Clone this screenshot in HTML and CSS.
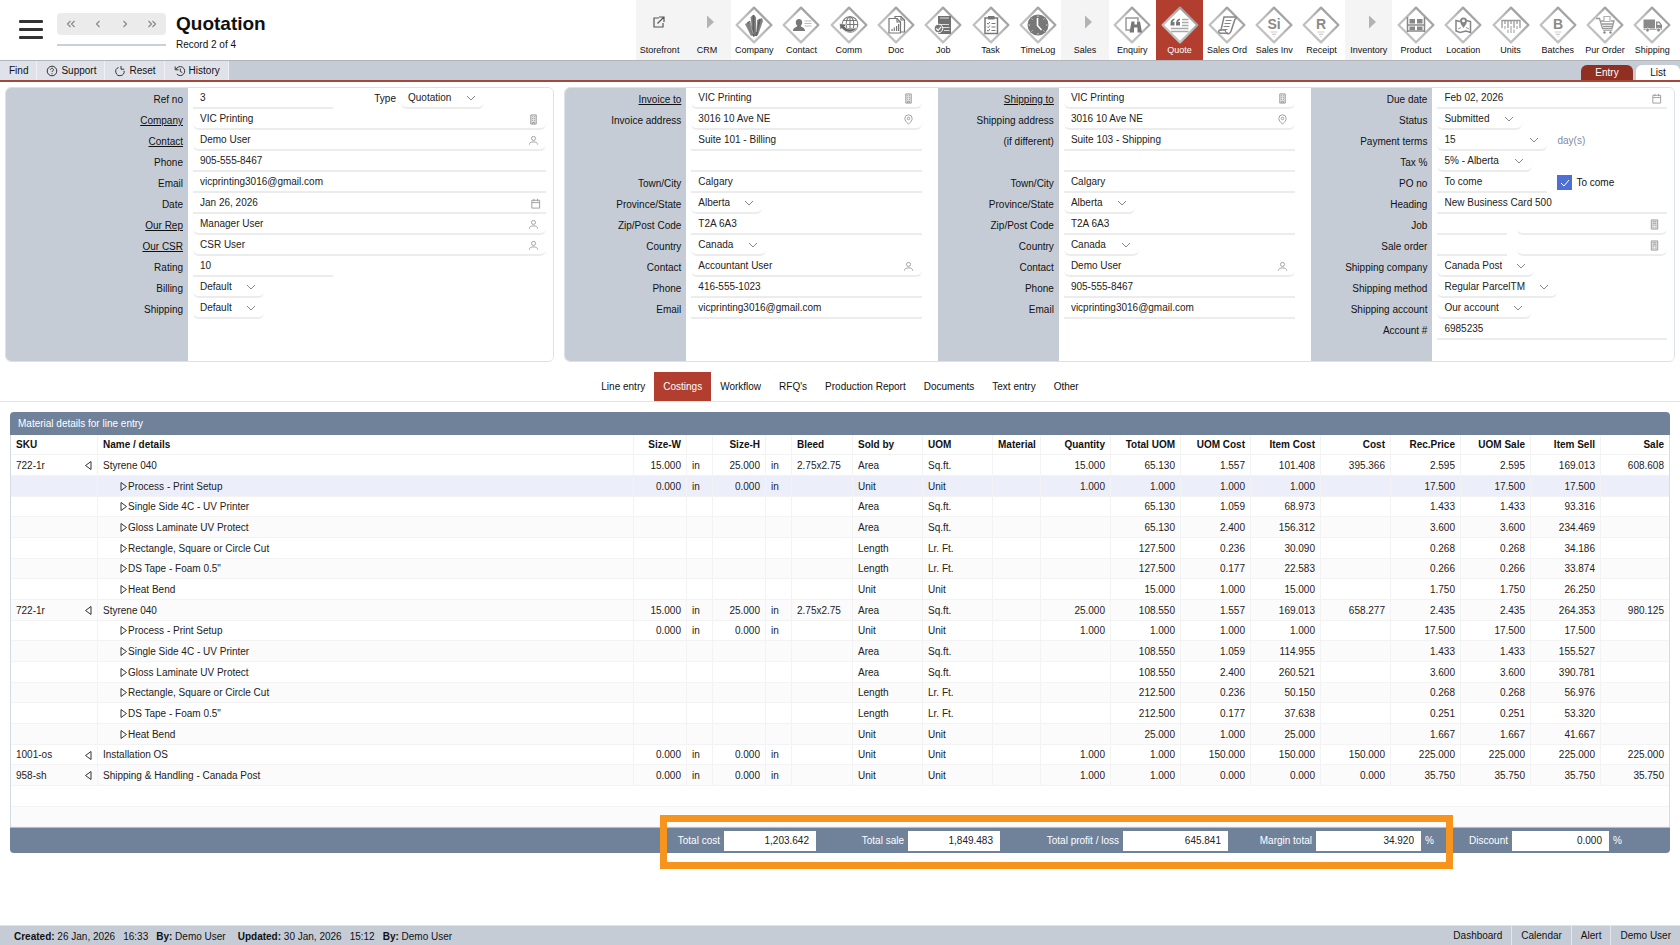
FILE: index.html
```html
<!DOCTYPE html>
<html lang="en">
<head>
<meta charset="utf-8">
<title>Quotation</title>
<link rel="stylesheet" href="styles.css">
</head>
<body>
<svg class="sprite" aria-hidden="true">
  <linearGradient id="edge" x1="0" y1="1" x2="1" y2="0"><stop offset="0" stop-color="#c4c4c4"/><stop offset=".5" stop-color="#bcbcbc"/><stop offset="1" stop-color="#8a8a8a"/></linearGradient>
  <symbol id="diamond" viewBox="0 0 38 38"><path d="M19 1.6 36.4 19 19 36.4 1.6 19Z" fill="#fff" stroke="url(#edge)" stroke-width="2.200" stroke-linejoin="round"/></symbol>
  <symbol id="play" viewBox="0 0 38 38"><path d="M19 9.500 26 16 19 22.500Z" fill="#b3b3b3"/></symbol>
  <symbol id="person" viewBox="0 0 12 12"><circle cx="6" cy="3.700" r="2.200"/><path d="M1.500 10.500C1.500 8.500 3 7.500 6 7.500s4.500 1 4.500 3"/></symbol>
  <symbol id="building" viewBox="0 0 12 12"><path d="M3 1h6v10H3Z" fill="#e4e4e4"/><path d="M4.500 3h1M6.700 3h1M4.500 5h1M6.700 5h1M4.500 7h1M6.700 7h1M5 11V9.200h2V11"/></symbol>
  <symbol id="calendar" viewBox="0 0 12 12"><path d="M2 2.500h8.500v8.500H2ZM2 5h8.500M4.200 1v2.500M8.200 1v2.500"/></symbol>
  <symbol id="pin" viewBox="0 0 12 12"><path d="M6 11C3.500 8.600 2 7 2 4.900a4 4 0 0 1 8 0C10 7 8.500 8.600 6 11Z"/><circle cx="6" cy="4.900" r="1.400"/></symbol>
  <symbol id="calc" viewBox="0 0 12 12"><path d="M2.500 1h7v10h-7Z" fill="#e4e4e4"/><path d="M4 3h4M4 5.200h4M4 7h1M7 7h1M4 9h1M7 9h1"/></symbol>
  <symbol id="tri-left" viewBox="0 0 8 11"><path d="M7 1.500v8L1.500 5.500Z"/></symbol>
  <symbol id="tri-right" viewBox="0 0 8 11"><path d="M1 1.500v8l5.500-4Z"/></symbol>
</svg>

<header class="top">
  <button class="burger" aria-label="Menu"><span></span><span></span><span></span></button>
  <div class="pager">
    <div class="pager-buttons">
      <button aria-label="First record"><svg viewBox="0 0 10 8"><path d="M4.500 1 1.500 4l3 3M8.500 1l-3 3 3 3"/></svg></button>
      <button aria-label="Previous record"><svg viewBox="0 0 10 8"><path d="M6.500 1l-3 3 3 3"/></svg></button>
      <button aria-label="Next record"><svg viewBox="0 0 10 8"><path d="M3.500 1l3 3-3 3"/></svg></button>
      <button aria-label="Last record"><svg viewBox="0 0 10 8"><path d="M1.500 1l3 3-3 3M5.500 1l3 3-3 3"/></svg></button>
    </div>
    <div class="pager-line"></div>
  </div>
  <div class="heading"><h1>Quotation</h1><p>Record 2 of 4</p></div>
  <nav class="modules">
    <a href="#" class="group"><svg viewBox="0 0 38 38"><path d="M18 12h-5v9h9v-4M18 11h5v5M23 11l-6.500 6.500" fill="none" stroke="#555" stroke-width="1.200"/></svg>Storefront</a>
    <a href="#" class="group"><svg><use href="#play"/></svg>CRM</a>
    <a href="#"><svg viewBox="0 0 38 38"><use href="#diamond"/><path d="M10 18l4-2 4 13-2 1ZM15.500 11l3-2 2.500 2v19l-3 1ZM22 14l5-2 1 3-5 14-2 1Z" fill="#858585"/><path d="M12.500 17l2-1 4 13M18.500 9v21M25 13l-4 17" fill="none" stroke="#5f5f5f" stroke-width="1.800"/><path d="M14.600 16l3.600 12M21.700 12v14" stroke="#eee" stroke-width=".5"/></svg>Company</a>
    <a href="#"><svg viewBox="0 0 38 38"><use href="#diamond"/><path d="M17 13c2 0 3.200 1.400 3.200 3.400 0 1.700-.8 2.700-1.500 3.400 0 1.500 4.300 1.500 4.300 5.200H11c0-3.700 4.300-3.700 4.300-5.200-.7-.7-1.500-1.700-1.500-3.400 0-2 1.200-3.400 3.200-3.400Z" fill="#777"/><path d="M22.500 15h7M22.500 17.500h7M22.500 20h7" stroke="#bbb"/></svg>Contact</a>
    <a href="#"><svg viewBox="0 0 38 38"><use href="#diamond"/><g fill="none" stroke="#777" stroke-width="1.100"><circle cx="20" cy="18.500" r="7.800"/><ellipse cx="20" cy="18.500" rx="3.800" ry="7.800"/><path d="M20 10.700v15.600M12.300 18.500h15.500M13.500 14.500h13M13.500 22.500h13"/></g><path d="M9.500 17.500l7 1-2 2c2.500 3 7.500 3.500 12.500.500-2.500 6-10.500 7-15 1.500l-1.800 1Z" fill="#666" stroke="#fff" stroke-width=".6"/></svg>Comm</a>
    <a href="#"><svg viewBox="0 0 38 38"><use href="#diamond"/><g fill="#fff" stroke="#777" stroke-width="1.200"><path d="M18 10.500h6l3.500 3.500v12H18Z"/><path d="M12 12.500h8l3.500 3.500v11H12Z"/><path d="M24 10.500V14h3.500M20 12.500V16h3.500M15 25v-2M17.300 25v-3.500M19.600 25v-5M21.600 25v-7" fill="none"/></g></svg>Doc</a>
    <a href="#"><svg viewBox="0 0 38 38"><use href="#diamond"/><path d="M14 10h13v18H14Z" fill="#707070"/><path d="M16 12h9M16 18.500h9M18.500 21.500h7M20 24.500h5.500" stroke="#ddd" stroke-width="1.200"/><circle cx="14.500" cy="22.500" r="4.300" fill="#777" stroke="#fff"/><path d="M12.300 22.500l1.800 1.800 3-3.500" fill="none" stroke="#fff" stroke-width="1.200"/></svg>Job</a>
    <a href="#"><svg viewBox="0 0 38 38"><use href="#diamond"/><path d="M13 12h12.500v15.500H13Z" fill="#fff" stroke="#777" stroke-width="1.500"/><path d="M16 10h6.500v3.500H16Z" fill="#777"/><path d="M15 17l1.200 1.200L18 16M15 20.500l1.200 1.200 1.800-2.200M15 24l1.200 1.200L18 23M19.500 17.500h4M19.500 21h4M19.500 24.500h4" fill="none" stroke="#777"/></svg>Task</a>
    <a href="#"><svg viewBox="0 0 38 38"><use href="#diamond"/><circle cx="19" cy="19" r="10.500" fill="#777"/><path d="M18.500 12v7.500l4 4.500" fill="none" stroke="#fff" stroke-width="1.600"/><path d="M19 9.500v1.500M19 27v1.500M9.500 19H11M27 19h1.500M12.500 12.500l1 1M25.500 12.500l-1 1M12.500 25.500l1-1M25.500 25.500l-1-1" stroke="#ddd"/></svg>TimeLog</a>
    <a href="#" class="group"><svg><use href="#play"/></svg>Sales</a>
    <a href="#"><svg viewBox="0 0 38 38"><use href="#diamond"/><path d="M17 24h-4V12h12v3" fill="none" stroke="#999" stroke-width="1.500"/><path d="M18.500 15.500h3v3h2.500v-3h3l2 11h-4.500v-5h-3.500v5h-4.500Z" fill="#777"/></svg>Enquiry</a>
    <a href="#" class="current" aria-current="page"><svg viewBox="0 0 38 38"><use href="#diamond"/><path d="M9.500 18c0-3 1-5 4-5.500v1.500c-1.300.5-1.600 1-1.600 2h1.600v3.500h-4ZM15 18c0-3 1-5 4-5.500v1.500c-1.300.5-1.600 1-1.600 2H19v3.500h-4Z" fill="#777"/><path d="M21 13.500h6.500M21 16.500h6.500M21 19.500h6.500M10 22.500h17.500M10 25.500h17.500" stroke="#aaa" stroke-width="1.500"/></svg>Quote</a>
    <a href="#"><svg viewBox="0 0 38 38"><use href="#diamond"/><path d="M16 11h11c1.500 0 1.500 2 0 2.200l-4 12c-.7 3-3.500 3-5 2H12c-2-1-1.500-3 0-3.200h1Z" fill="#fff" stroke="#858585" stroke-width="1.500"/><path d="M17.500 14.500h6M16.500 17.500h6M15.500 20.500h6M14.500 23.500h5M12 24.200h5.500c-.5 2 1 3 2.500 2.300" fill="none" stroke="#858585" stroke-width="1.200"/></svg>Sales Ord</a>
    <a href="#"><svg viewBox="0 0 38 38"><use href="#diamond"/><text x="19" y="22.500" class="letter">Si</text><path d="M15.500 26h7M17 28.300h4M18.500 30.500h1" stroke="#ccc" stroke-width="1.200"/></svg>Sales Inv</a>
    <a href="#"><svg viewBox="0 0 38 38"><use href="#diamond"/><text x="19" y="22.500" class="letter">R</text><path d="M15.500 26h7M17 28.300h4M18.500 30.500h1" stroke="#ccc" stroke-width="1.200"/></svg>Receipt</a>
    <a href="#" class="group"><svg><use href="#play"/></svg>Inventory</a>
    <a href="#"><svg viewBox="0 0 38 38"><use href="#diamond"/><path d="M10.500 11v15M27.500 11v15M10.500 19h17M10.500 25h17" stroke="#888" stroke-width="1.500"/><path d="M12.500 13h5.500v4.500h-5.500ZM20 13h5.500v4.500H20ZM12.500 20.500h5.500V24h-5.500ZM20 20.500h5.500V24H20Z" fill="#888"/></svg>Product</a>
    <a href="#"><svg viewBox="0 0 38 38"><use href="#diamond"/><path d="M16 15.500l-4-1v10.500l4 1.500 6-1.500 4.500 1.500V15.500l-4-1" fill="none" stroke="#858585" stroke-width="1.500"/><path d="M19.500 22c-2-3-3.500-5-3.500-7a3.500 3.500 0 0 1 7 0c0 2-1.500 4-3.500 7Z" fill="#858585"/><circle cx="19.500" cy="14.800" r="1.500" fill="#fff"/><path d="M14 23l3-1.500M22 21.500l3 1.500" stroke="#999"/></svg>Location</a>
    <a href="#"><svg viewBox="0 0 38 38"><use href="#diamond"/><path d="M10 22v-7.500h18V22M13 14.500V18M16 14.500V22M19 14.500V18M22 14.500V22M25 14.500V18" fill="none" stroke="#999" stroke-width="1.300"/><path d="M13 20v3M16 23.500V27M19 20v7M22 23.500V27M25 20v3" stroke="#b8b8b8" stroke-width="1.400"/></svg>Units</a>
    <a href="#"><svg viewBox="0 0 38 38"><use href="#diamond"/><text x="19" y="22.500" class="letter">B</text><path d="M15.500 26h7M17 28.300h4M18.500 30.500h1" stroke="#ccc" stroke-width="1.200"/></svg>Batches</a>
    <a href="#"><svg viewBox="0 0 38 38"><use href="#diamond"/><path d="M10 12.500h3.500l3 10h9.500l2-7.500h-3M16 18h10.500M15 15h3M17 20.300h9" fill="none" stroke="#999" stroke-width="1.300"/><path d="M18 10.500h6v5h-6ZM17 24.300h9.500" fill="none" stroke="#b0b0b0" stroke-width="1.200"/><circle cx="18.500" cy="26.500" r="1.200" fill="#888"/><circle cx="24.500" cy="26.500" r="1.200" fill="#888"/></svg>Pur Order</a>
    <a href="#"><svg viewBox="0 0 38 38"><use href="#diamond"/><path d="M10.500 13.500H22v9H10.500ZM23 15.500h3.500l2.500 3.500v3.500h-6Z" fill="#8a8a8a"/><path d="M10.500 23.500H29" stroke="#aaa"/><path d="M24.300 16.800h1.700l1.500 2.200h-3.200Z" fill="#eee"/><circle cx="14.500" cy="24" r="1.900" fill="#8a8a8a" stroke="#fff" stroke-width=".7"/><circle cx="25.500" cy="24" r="1.900" fill="#8a8a8a" stroke="#fff" stroke-width=".7"/></svg>Shipping</a>
  </nav>
</header>

<div class="toolbar">
  <button>Find</button>
  <button><svg viewBox="0 0 12 12"><circle cx="6" cy="6" r="4.800"/><path d="M4.500 4.800c0-2 3-2 3 0 0 1.200-1.500 1-1.500 2.200M6 8.200v1"/></svg>Support</button>
  <button><svg viewBox="0 0 12 12"><path d="M4.500 2.500a4.200 4.200 0 1 0 5.600 3.300M7 1v3.200h3.200"/></svg>Reset</button>
  <button><svg viewBox="0 0 12 12"><path d="M2 4.500a4.500 4.500 0 1 1 .8 4.500M1.200 1.500v3.300h3.300M6.300 3.500v3l2 1"/></svg>History</button>
  <div class="views"><a href="#" class="on">Entry</a><a href="#">List</a></div>
</div>

<main>
<form class="record">
  <section class="panel panel-main">
    <div class="col">
      <div class="row"><label for="ref">Ref no</label><div class="field"><input class="line w140" id="ref" value="3"><label class="inline" for="type">Type</label><select id="type"><option>Quotation</option></select></div></div>
      <div class="row"><label for="company"><a href="#">Company</a></label><div class="field"><span class="lookup"><input id="company" value="VIC Printing"><button type="button" aria-label="Find company"><svg><use href="#building"/></svg></button></span></div></div>
      <div class="row"><label for="contact"><a href="#">Contact</a></label><div class="field"><span class="lookup"><input id="contact" value="Demo User"><button type="button" aria-label="Find contact"><svg><use href="#person"/></svg></button></span></div></div>
      <div class="row"><label for="phone">Phone</label><div class="field"><input class="line" id="phone" value="905-555-8467"></div></div>
      <div class="row"><label for="email">Email</label><div class="field"><input class="line" id="email" value="vicprinting3016@gmail.com"></div></div>
      <div class="row"><label for="date">Date</label><div class="field"><span class="lookup flat"><input id="date" value="Jan 26, 2026"><button type="button" aria-label="Pick date"><svg><use href="#calendar"/></svg></button></span></div></div>
      <div class="row"><label for="rep"><a href="#">Our Rep</a></label><div class="field"><span class="lookup"><input id="rep" value="Manager User"><button type="button" aria-label="Find rep"><svg><use href="#person"/></svg></button></span></div></div>
      <div class="row"><label for="csr"><a href="#">Our CSR</a></label><div class="field"><span class="lookup"><input id="csr" value="CSR User"><button type="button" aria-label="Find CSR"><svg><use href="#person"/></svg></button></span></div></div>
      <div class="row"><label for="rating">Rating</label><div class="field"><input class="line w140" id="rating" value="10"></div></div>
      <div class="row"><label for="billing">Billing</label><div class="field"><select id="billing"><option>Default</option></select></div></div>
      <div class="row"><label for="shipping">Shipping</label><div class="field"><select id="shipping"><option>Default</option></select></div></div>
    </div>
  </section>

  <section class="panel panel-wide">
    <div class="col addr">
      <div class="row"><label for="i-to"><a href="#">Invoice to</a></label><div class="field"><span class="lookup"><input id="i-to" value="VIC Printing"><button type="button" aria-label="Find company"><svg><use href="#building"/></svg></button></span></div></div>
      <div class="row"><label for="i-addr">Invoice address</label><div class="field"><span class="lookup"><input id="i-addr" value="3016 10 Ave NE"><button type="button" aria-label="Find address"><svg><use href="#pin"/></svg></button></span></div></div>
      <div class="row"><span></span><div class="field"><input class="line" aria-label="Invoice address line 2" value="Suite 101 - Billing"></div></div>
      <div class="row"><span></span><div class="field"><input class="line" aria-label="Invoice address line 3"></div></div>
      <div class="row"><label for="i-city">Town/City</label><div class="field"><input class="line" id="i-city" value="Calgary"></div></div>
      <div class="row"><label for="i-prov">Province/State</label><div class="field"><select id="i-prov"><option>Alberta</option></select></div></div>
      <div class="row"><label for="i-zip">Zip/Post Code</label><div class="field"><input class="line" id="i-zip" value="T2A 6A3"></div></div>
      <div class="row"><label for="i-country">Country</label><div class="field"><select id="i-country"><option>Canada</option></select></div></div>
      <div class="row"><label for="i-contact">Contact</label><div class="field"><span class="lookup"><input id="i-contact" value="Accountant User"><button type="button" aria-label="Find contact"><svg><use href="#person"/></svg></button></span></div></div>
      <div class="row"><label for="i-phone">Phone</label><div class="field"><input class="line" id="i-phone" value="416-555-1023"></div></div>
      <div class="row"><label for="i-email">Email</label><div class="field"><input class="line" id="i-email" value="vicprinting3016@gmail.com"></div></div>
    </div>
    <div class="col addr">
      <div class="row"><label for="s-to"><a href="#">Shipping to</a></label><div class="field"><span class="lookup"><input id="s-to" value="VIC Printing"><button type="button" aria-label="Find company"><svg><use href="#building"/></svg></button></span></div></div>
      <div class="row"><label for="s-addr">Shipping address</label><div class="field"><span class="lookup"><input id="s-addr" value="3016 10 Ave NE"><button type="button" aria-label="Find address"><svg><use href="#pin"/></svg></button></span></div></div>
      <div class="row"><label for="s-addr2">(if different)</label><div class="field"><input class="line" id="s-addr2" value="Suite 103 - Shipping"></div></div>
      <div class="row"><span></span><div class="field"><input class="line" aria-label="Shipping address line 3"></div></div>
      <div class="row"><label for="s-city">Town/City</label><div class="field"><input class="line" id="s-city" value="Calgary"></div></div>
      <div class="row"><label for="s-prov">Province/State</label><div class="field"><select id="s-prov"><option>Alberta</option></select></div></div>
      <div class="row"><label for="s-zip">Zip/Post Code</label><div class="field"><input class="line" id="s-zip" value="T2A 6A3"></div></div>
      <div class="row"><label for="s-country">Country</label><div class="field"><select id="s-country"><option>Canada</option></select></div></div>
      <div class="row"><label for="s-contact">Contact</label><div class="field"><span class="lookup"><input id="s-contact" value="Demo User"><button type="button" aria-label="Find contact"><svg><use href="#person"/></svg></button></span></div></div>
      <div class="row"><label for="s-phone">Phone</label><div class="field"><input class="line" id="s-phone" value="905-555-8467"></div></div>
      <div class="row"><label for="s-email">Email</label><div class="field"><input class="line" id="s-email" value="vicprinting3016@gmail.com"></div></div>
    </div>
    <div class="col terms">
      <div class="row"><label for="due">Due date</label><div class="field"><span class="lookup flat"><input id="due" value="Feb 02, 2026"><button type="button" aria-label="Pick date"><svg><use href="#calendar"/></svg></button></span></div></div>
      <div class="row"><label for="status">Status</label><div class="field"><select id="status"><option>Submitted</option></select></div></div>
      <div class="row"><label for="pay">Payment terms</label><div class="field"><select class="w110" id="pay"><option>15</option></select><span class="unit">day(s)</span></div></div>
      <div class="row"><label for="tax">Tax %</label><div class="field"><select id="tax"><option>5% - Alberta</option></select></div></div>
      <div class="row"><label for="po">PO no</label><div class="field"><input class="line w110" id="po" value="To come"><label class="check"><input type="checkbox" checked>To come</label></div></div>
      <div class="row"><label for="head">Heading</label><div class="field"><input class="line" id="head" value="New Business Card 500"></div></div>
      <div class="row"><label for="job">Job</label><div class="field pair"><input class="line w70" id="job"><span class="lookup"><input aria-label="Job name"><button type="button" aria-label="Find job"><svg><use href="#calc"/></svg></button></span></div></div>
      <div class="row"><label for="so">Sale order</label><div class="field pair"><input class="line w70" id="so"><span class="lookup"><input aria-label="Sale order name"><button type="button" aria-label="Find sale order"><svg><use href="#calc"/></svg></button></span></div></div>
      <div class="row"><label for="sc">Shipping company</label><div class="field"><select id="sc"><option>Canada Post</option></select></div></div>
      <div class="row"><label for="sm">Shipping method</label><div class="field"><select id="sm"><option>Regular ParcelTM</option></select></div></div>
      <div class="row"><label for="sa">Shipping account</label><div class="field"><select id="sa"><option>Our account</option></select></div></div>
      <div class="row"><label for="acc">Account #</label><div class="field"><input class="line" id="acc" value="6985235"></div></div>
    </div>
  </section>
</form>

<nav class="tabs">
  <a href="#">Line entry</a><a href="#" class="on">Costings</a><a href="#">Workflow</a><a href="#">RFQ's</a><a href="#">Production Report</a><a href="#">Documents</a><a href="#">Text entry</a><a href="#">Other</a>
</nav>

<section class="card">
  <h2>Material details for line entry</h2>
  <table>
    <colgroup><col class="c-sku"><col><col class="c-size"><col class="c-unit"><col class="c-size"><col class="c-unit"><col class="c-bleed"><col class="c-num"><col class="c-num"><col class="c-mat"><col class="c-num" span="8"><col class="c-last"></colgroup>
    <thead><tr><th>SKU</th><th>Name / details</th><th class="n">Size-W</th><th></th><th class="n">Size-H</th><th></th><th>Bleed</th><th>Sold by</th><th>UOM</th><th>Material</th><th class="n">Quantity</th><th class="n">Total UOM</th><th class="n">UOM Cost</th><th class="n">Item Cost</th><th class="n">Cost</th><th class="n">Rec.Price</th><th class="n">UOM Sale</th><th class="n">Item Sell</th><th class="n">Sale</th></tr></thead>
    <tbody>
      <tr><td><span class="sku">722-1r<svg><use href="#tri-left"/></svg></span></td><td>Styrene 040</td><td>15.000</td><td>in</td><td>25.000</td><td>in</td><td>2.75x2.75</td><td>Area</td><td>Sq.ft.</td><td></td><td>15.000</td><td>65.130</td><td>1.557</td><td>101.408</td><td>395.366</td><td>2.595</td><td>2.595</td><td>169.013</td><td>608.608</td></tr>
      <tr class="selected"><td></td><td class="sub"><svg><use href="#tri-right"/></svg>Process - Print Setup</td><td>0.000</td><td>in</td><td>0.000</td><td>in</td><td></td><td>Unit</td><td>Unit</td><td></td><td>1.000</td><td>1.000</td><td>1.000</td><td>1.000</td><td></td><td>17.500</td><td>17.500</td><td>17.500</td><td></td></tr>
      <tr><td></td><td class="sub"><svg><use href="#tri-right"/></svg>Single Side 4C - UV Printer</td><td></td><td></td><td></td><td></td><td></td><td>Area</td><td>Sq.ft.</td><td></td><td></td><td>65.130</td><td>1.059</td><td>68.973</td><td></td><td>1.433</td><td>1.433</td><td>93.316</td><td></td></tr>
      <tr><td></td><td class="sub"><svg><use href="#tri-right"/></svg>Gloss Laminate UV Protect</td><td></td><td></td><td></td><td></td><td></td><td>Area</td><td>Sq.ft.</td><td></td><td></td><td>65.130</td><td>2.400</td><td>156.312</td><td></td><td>3.600</td><td>3.600</td><td>234.469</td><td></td></tr>
      <tr><td></td><td class="sub"><svg><use href="#tri-right"/></svg>Rectangle, Square or Circle Cut</td><td></td><td></td><td></td><td></td><td></td><td>Length</td><td>Lr. Ft.</td><td></td><td></td><td>127.500</td><td>0.236</td><td>30.090</td><td></td><td>0.268</td><td>0.268</td><td>34.186</td><td></td></tr>
      <tr><td></td><td class="sub"><svg><use href="#tri-right"/></svg>DS Tape - Foam 0.5"</td><td></td><td></td><td></td><td></td><td></td><td>Length</td><td>Lr. Ft.</td><td></td><td></td><td>127.500</td><td>0.177</td><td>22.583</td><td></td><td>0.266</td><td>0.266</td><td>33.874</td><td></td></tr>
      <tr><td></td><td class="sub"><svg><use href="#tri-right"/></svg>Heat Bend</td><td></td><td></td><td></td><td></td><td></td><td>Unit</td><td>Unit</td><td></td><td></td><td>15.000</td><td>1.000</td><td>15.000</td><td></td><td>1.750</td><td>1.750</td><td>26.250</td><td></td></tr>
      <tr><td><span class="sku">722-1r<svg><use href="#tri-left"/></svg></span></td><td>Styrene 040</td><td>15.000</td><td>in</td><td>25.000</td><td>in</td><td>2.75x2.75</td><td>Area</td><td>Sq.ft.</td><td></td><td>25.000</td><td>108.550</td><td>1.557</td><td>169.013</td><td>658.277</td><td>2.435</td><td>2.435</td><td>264.353</td><td>980.125</td></tr>
      <tr><td></td><td class="sub"><svg><use href="#tri-right"/></svg>Process - Print Setup</td><td>0.000</td><td>in</td><td>0.000</td><td>in</td><td></td><td>Unit</td><td>Unit</td><td></td><td>1.000</td><td>1.000</td><td>1.000</td><td>1.000</td><td></td><td>17.500</td><td>17.500</td><td>17.500</td><td></td></tr>
      <tr><td></td><td class="sub"><svg><use href="#tri-right"/></svg>Single Side 4C - UV Printer</td><td></td><td></td><td></td><td></td><td></td><td>Area</td><td>Sq.ft.</td><td></td><td></td><td>108.550</td><td>1.059</td><td>114.955</td><td></td><td>1.433</td><td>1.433</td><td>155.527</td><td></td></tr>
      <tr><td></td><td class="sub"><svg><use href="#tri-right"/></svg>Gloss Laminate UV Protect</td><td></td><td></td><td></td><td></td><td></td><td>Area</td><td>Sq.ft.</td><td></td><td></td><td>108.550</td><td>2.400</td><td>260.521</td><td></td><td>3.600</td><td>3.600</td><td>390.781</td><td></td></tr>
      <tr><td></td><td class="sub"><svg><use href="#tri-right"/></svg>Rectangle, Square or Circle Cut</td><td></td><td></td><td></td><td></td><td></td><td>Length</td><td>Lr. Ft.</td><td></td><td></td><td>212.500</td><td>0.236</td><td>50.150</td><td></td><td>0.268</td><td>0.268</td><td>56.976</td><td></td></tr>
      <tr><td></td><td class="sub"><svg><use href="#tri-right"/></svg>DS Tape - Foam 0.5"</td><td></td><td></td><td></td><td></td><td></td><td>Length</td><td>Lr. Ft.</td><td></td><td></td><td>212.500</td><td>0.177</td><td>37.638</td><td></td><td>0.251</td><td>0.251</td><td>53.320</td><td></td></tr>
      <tr><td></td><td class="sub"><svg><use href="#tri-right"/></svg>Heat Bend</td><td></td><td></td><td></td><td></td><td></td><td>Unit</td><td>Unit</td><td></td><td></td><td>25.000</td><td>1.000</td><td>25.000</td><td></td><td>1.667</td><td>1.667</td><td>41.667</td><td></td></tr>
      <tr><td><span class="sku">1001-os<svg><use href="#tri-left"/></svg></span></td><td>Installation OS</td><td>0.000</td><td>in</td><td>0.000</td><td>in</td><td></td><td>Unit</td><td>Unit</td><td></td><td>1.000</td><td>1.000</td><td>150.000</td><td>150.000</td><td>150.000</td><td>225.000</td><td>225.000</td><td>225.000</td><td>225.000</td></tr>
      <tr><td><span class="sku">958-sh<svg><use href="#tri-left"/></svg></span></td><td>Shipping &amp; Handling - Canada Post</td><td>0.000</td><td>in</td><td>0.000</td><td>in</td><td></td><td>Unit</td><td>Unit</td><td></td><td>1.000</td><td>1.000</td><td>0.000</td><td>0.000</td><td>0.000</td><td>35.750</td><td>35.750</td><td>35.750</td><td>35.750</td></tr>
      <tr><td colspan="19"></td></tr>
      <tr><td colspan="19"></td></tr>
    </tbody>
  </table>
  <div class="totals">
    <div class="marked">
      <div class="total"><label for="t-cost">Total cost</label><input class="in-s" id="t-cost" value="1,203.642"></div>
      <div class="total t-sale"><label for="t-sale">Total sale</label><input class="in-s" id="t-sale" value="1,849.483"></div>
      <div class="total t-profit"><label for="t-profit">Total profit / loss</label><input class="in-l" id="t-profit" value="645.841"></div>
      <div class="total t-margin"><label for="t-margin">Margin total</label><input class="in-l" id="t-margin" value="34.920"><span>%</span></div>
    </div>
    <div class="total t-disc"><label for="t-disc">Discount</label><input class="in-m" id="t-disc" value="0.000"><span>%</span></div>
  </div>
</section>
</main>

<footer class="status">
  <p class="stamps"><span><b>Created:</b> 26 Jan, 2026</span><span>16:33</span><span class="by"><b>By:</b> Demo User</span><span><b>Updated:</b> 30 Jan, 2026</span><span>15:12</span><span><b>By:</b> Demo User</span></p>
  <nav class="links"><a href="#">Dashboard</a><a href="#">Calendar</a><a href="#">Alert</a><a href="#">Demo User</a></nav>
</footer>
</body>
</html>
```
FILE: styles.css
```css
* { box-sizing: border-box; }
body {
  margin: 0;
  min-height: 100vh;
  display: flex;
  flex-direction: column;
  font: 10px/12px "Liberation Sans", Arial, sans-serif;
  color: #111;
  background: #fff;
}
a { color: inherit; text-decoration: none; }
button { border: 0; padding: 0; background: none; font: inherit; color: inherit; }
input, select { font: inherit; color: #222; border: 0; margin: 0; outline: 0; background: none; border-radius: 0; }
h1, h2, p { margin: 0; }
.sprite { position: absolute; width: 0; height: 0; }

/* Header */
.top { display: flex; height: 61px; border-bottom: 1px solid #b2b5b9; }
.burger { display: flex; flex-direction: column; gap: 5px; width: 24px; margin: 20px 14px 0 19px; }
.burger span { height: 3px; background: #333; border-radius: 1px; }
.pager { width: 109px; margin-top: 13px; }
.pager-buttons { display: grid; grid-template-columns: repeat(4, 1fr); height: 22px; background: #ebebeb; border-radius: 4px; }
.pager-buttons button { display: grid; place-items: center; }
.pager-buttons svg { width: 10px; height: 8px; fill: none; stroke: #888; stroke-width: 1.200; }
.pager-line { height: 2px; margin-top: 9px; background: #c9d0da; }
.heading { margin: 12px 20px 0 10px; white-space: nowrap; }
.heading h1 { font-size: 19px; line-height: 24px; }
.heading p { margin-top: 3px; }
.modules { display: grid; grid-template-columns: repeat(22, 1fr); width: 1040px; margin: 0 4px 0 auto; font-size: 9px; }
.modules a { display: flex; flex-direction: column; align-items: center; padding-top: 6px; white-space: nowrap; }
.modules svg { width: 38px; height: 38px; }
.modules .group { background: #f4f4f4; }
.modules .current { background: #b13e2e; color: #fff; }
.letter { font: bold 14px "Liberation Sans", Arial, sans-serif; fill: #8a8a8a; text-anchor: middle; }

/* Toolbar */
.toolbar { display: flex; height: 21px; background: #c6ccd6; border-bottom: 2px solid #a5473a; }
.toolbar button { display: flex; align-items: center; gap: 3px; padding: 0 8px 0 9px; background: #dfe3e9; border-right: 1px solid #eef0f3; }
.toolbar svg { width: 12px; height: 12px; fill: none; stroke: #333; }
.views { display: flex; gap: 3px; margin: 4px 0 0 auto; }
.views a { width: 52px; padding-top: 2px; text-align: center; background: #fff; border-radius: 6px 6px 0 0; }
.views a:last-child { width: 44px; }
.views .on { background: #8f3022; color: #fff; }

/* Record form */
.record { display: grid; grid-template-columns: 549fr 1110fr; gap: 10px; padding: 5px 5px 0; }
.panel { display: grid; min-height: 275px; border: 1px solid #dce1e9; border-radius: 6px; overflow: hidden; }
.panel-wide { grid-template-columns: 373fr 374fr 363fr; }
.col { --label: 121px; background: linear-gradient(to right, #c6ccd6 var(--label), #fff var(--label)); }
.panel-main .col { --label: 182px; }
.row { display: grid; grid-template-columns: var(--label) 1fr; height: 21px; }
.row > label { padding: 6px 5px 0 0; text-align: right; }
.row > label a { text-decoration: underline; }
.field { display: flex; min-width: 0; padding: 0 7px 0 5px; }
.addr .field { padding-right: 16px; }
.line, .lookup { flex: 1; min-width: 0; border-bottom: 2px solid #ececec; }
.line { padding: 1px 7px 0; }
.lookup { display: flex; border-radius: 0 0 6px 6px; }
.lookup.flat { border-radius: 0; }
.lookup input { flex: 1; min-width: 0; padding: 1px 7px 0; }
.lookup button { display: grid; place-items: center; width: 26px; padding-top: 1px; }
.lookup.flat button { width: 22px; }
.lookup svg { width: 11px; height: 11px; fill: none; stroke: #999; }
select {
  appearance: none;
  padding: 1px 32px 0 7px;
  border-bottom: 2px solid #ececec;
  border-radius: 0 0 6px 6px;
  background: url("data:image/svg+xml,%3Csvg xmlns='http://www.w3.org/2000/svg' width='10' height='6'%3E%3Cpath d='M1 1l4 4 4-4' fill='none' stroke='%23888'/%3E%3C/svg%3E") no-repeat right 8px center;
}
.w140 { flex: 0 0 140px; }
.w110 { flex: 0 0 110px; }
.w70 { flex: 0 0 70px; }
.pair { gap: 10px; }
.inline { width: 68px; padding: 5px 5px 0 0; text-align: right; }
.unit { padding: 5px 0 0 10px; color: #7c8ba5; }
.check { display: flex; align-items: center; gap: 4px; padding-left: 10px; }
.check input {
  appearance: none;
  width: 15px;
  height: 15px;
  background: #4d6fd6 url("data:image/svg+xml,%3Csvg xmlns='http://www.w3.org/2000/svg' width='10' height='8'%3E%3Cpath d='M1 4l3 3 5-6' fill='none' stroke='white'/%3E%3C/svg%3E") no-repeat center;
}

/* Tabs */
.tabs { display: flex; justify-content: center; margin-top: 10px; border-bottom: 1px solid #e3e3e3; }
.tabs a { padding: 9px 9px 8px; }
.tabs .on { background: #b13e2e; color: #fff; }

/* Costings table */
.card { margin: 10px 10px 20px; }
.card h2 { height: 23px; padding: 6px 8px 0; font-size: 10px; font-weight: normal; line-height: 12px; color: #fff; background: #70829a; border-radius: 4px 4px 0 0; }
table { width: 100%; table-layout: fixed; border-collapse: separate; border-spacing: 0; border: solid #d5dbe3; border-width: 0 1px; }
.c-sku { width: 87px; }
.c-size { width: 53px; }
.c-unit { width: 26px; }
.c-bleed { width: 61px; }
.c-num { width: 70px; }
.c-mat { width: 48px; }
.c-last { width: 68px; }
th, td { height: 21px; padding: 1px 5px 0; text-align: left; white-space: nowrap; border: solid #f3f3f3; border-width: 0 1px 1px 0; }
th { height: 20px; }
tr > :last-child { border-right: 0; }
td { color: #222; }
tbody tr:nth-child(3n) td { height: 20px; }
tbody tr:nth-child(even) { background: #fbfbfb; }
tbody tr.selected { background: #eceffa; }
.n, td:nth-child(3), td:nth-child(5), td:nth-child(n+11) { text-align: right; }
.sku { display: flex; align-items: center; justify-content: space-between; }
td svg { width: 8px; height: 11px; fill: none; stroke: #333; vertical-align: -2px; }
.sub { padding-left: 22px; }

/* Totals */
.totals { display: flex; justify-content: flex-end; height: 26px; padding-right: 48px; color: #fff; background: #70829a; border-top: 1px solid #b4bfcc; border-radius: 0 0 4px 4px; }
.marked { display: flex; position: relative; }
.marked::after { content: ""; position: absolute; inset: -13px -19px -16px -18px; border: 7px solid #f7941d; pointer-events: none; }
.total { display: flex; align-items: center; justify-content: flex-end; gap: 4px; }
.total input { height: 20px; padding: 0 7px; text-align: right; background: #fff; }
.total span { width: 9px; }
.in-s { width: 92px; }
.in-m { width: 97px; }
.in-l { width: 105px; }
.t-sale { width: 184px; }
.t-profit { width: 228px; }
.t-margin { width: 206px; }
.t-disc { width: 188px; }

/* Status bar */
.status { display: flex; justify-content: space-between; height: 20px; margin-top: auto; background: #c6ccd6; border-top: 1px solid #dfe3e9; }
.stamps { display: flex; gap: 8px; padding: 5px 14px 0; }
.stamps .by { margin-right: 4px; }
.links { display: flex; }
.links a { padding: 4px 9px 0; border-left: 1px solid #e3e6eb; }
.links a:first-child { border-left: 0; }
```
